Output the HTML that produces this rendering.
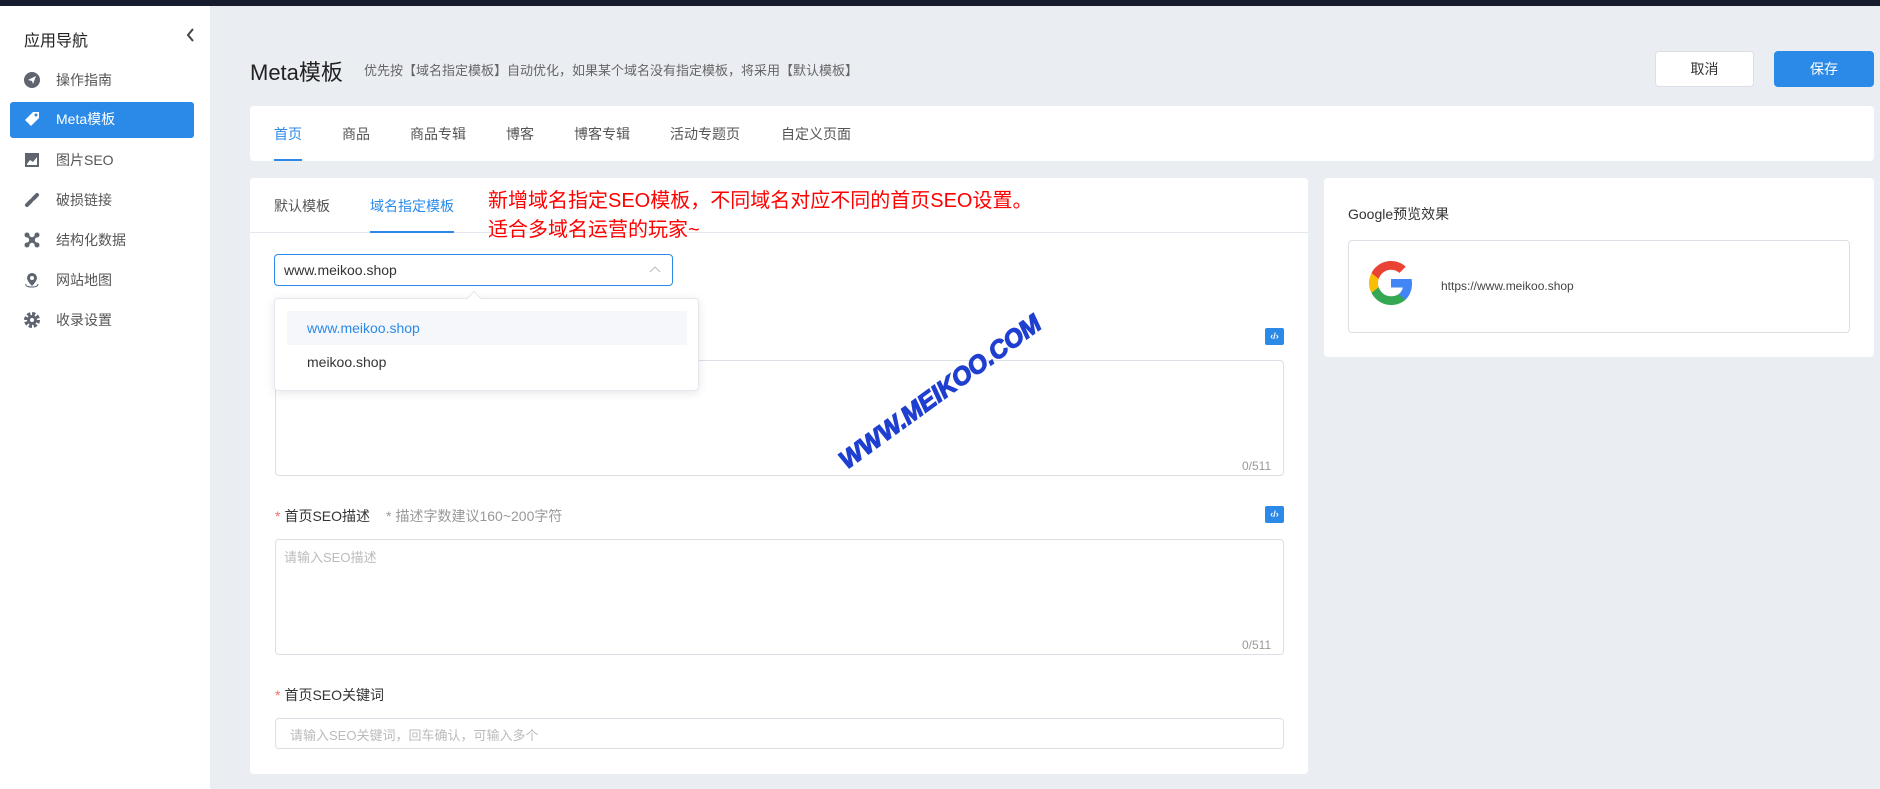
<!DOCTYPE html>
<html><head><meta charset="utf-8"><style>
*{margin:0;padding:0;box-sizing:border-box}
body{width:1880px;height:789px;overflow:hidden;background:#eaedf2;font-family:"Liberation Sans","Noto Sans CJK SC",sans-serif;position:relative;color:#333}
.a{position:absolute;white-space:nowrap}
.top{left:0;top:0;width:1880px;height:6px;background:#161c2e}
.side{left:0;top:6px;width:210px;height:783px;background:#fff}
.mi{position:absolute;left:24px;width:170px;height:20px;font-size:14px;color:#555;line-height:20px}
.mi svg{position:absolute;left:0;top:2px}
.mi span{position:absolute;left:32px}
.card{background:#fff;border-radius:4px}
.tab{font-size:14px;color:#555;top:124px;line-height:20px}
.ta{border:1px solid #dcdfe6;border-radius:4px;background:#fff}
.code{width:19px;height:17px;background:#2b8ae8;border-radius:2px;color:#fff;font-size:9px;text-align:center;line-height:17px;font-weight:bold}
.lbl{font-size:14px;color:#333;line-height:20px}
.lbl b{color:#f56c6c;font-weight:normal;margin-right:4px}
.cnt{font-size:12px;color:#999}
</style></head><body>
<div class="a top"></div>
<div class="a side"></div>
<div class="a" style="left:24px;top:27px;font-size:16px;color:#222">应用导航</div>
<svg class="a" style="left:186px;top:27px" width="10" height="16"><path d="M7 2L2 8L7 14" stroke="#444" stroke-width="2" fill="none"/></svg>
<div class="a" style="left:10px;top:102px;width:184px;height:36px;background:#2b8ae8;border-radius:3px"></div>
<div class="mi" style="top:70px"><svg width="16" height="16"><circle cx="8" cy="8" r="8" fill="#5e6470"/><path d="M4 8L12 4L9 12L8 9Z" fill="#fff"/></svg><span>操作指南</span></div>
<div class="mi" style="top:109px;color:#fff"><svg width="16" height="16"><path d="M9 1H15V7L7 15L1 9Z" fill="#fff"/><circle cx="12" cy="4" r="1.5" fill="#2b8ae8"/></svg><span>Meta模板</span></div>
<div class="mi" style="top:150px"><svg width="16" height="16"><rect x="1" y="1" width="14" height="14" fill="#5e6470"/><path d="M3 12L6 8L9 10L13 5V13H3Z" fill="#fff"/></svg><span>图片SEO</span></div>
<div class="mi" style="top:190px"><svg width="16" height="16"><path d="M3 13L7 9M9 7L13 3" stroke="#5e6470" stroke-width="4" stroke-linecap="round"/></svg><span>破损链接</span></div>
<div class="mi" style="top:230px"><svg width="16" height="16"><path d="M3 3L13 13M13 3L3 13" stroke="#5e6470" stroke-width="2.5"/><circle cx="3" cy="3" r="2.5" fill="#5e6470"/><circle cx="13" cy="3" r="2.5" fill="#5e6470"/><circle cx="3" cy="13" r="2.5" fill="#5e6470"/><circle cx="13" cy="13" r="2.5" fill="#5e6470"/><circle cx="8" cy="8" r="3" fill="#5e6470"/></svg><span>结构化数据</span></div>
<div class="mi" style="top:270px"><svg width="16" height="16"><path d="M8 1a5 5 0 0 1 5 5c0 3-5 8-5 8s-5-5-5-8a5 5 0 0 1 5-5z" fill="#5e6470"/><circle cx="8" cy="6" r="2" fill="#fff"/><path d="M2 12c-1 2 2 3 6 3s6-1 6-3" stroke="#5e6470" fill="none"/></svg><span>网站地图</span></div>
<div class="mi" style="top:310px"><svg width="16" height="16"><circle cx="8" cy="8" r="6" fill="none" stroke="#5e6470" stroke-width="4" stroke-dasharray="3 1.7"/><circle cx="8" cy="8" r="5" fill="#5e6470"/><circle cx="8" cy="8" r="2" fill="#fff"/></svg><span>收录设置</span></div>

<div class="a" style="left:250px;top:55px;font-size:22px;color:#222">Meta模板</div>
<div class="a" style="left:364px;top:60px;font-size:13px;color:#666">优先按【域名指定模板】自动优化，如果某个域名没有指定模板，将采用【默认模板】</div>
<div class="a" style="left:1655px;top:51px;width:99px;height:36px;background:#fff;border:1px solid #dcdfe6;border-radius:4px;font-size:14px;text-align:center;line-height:34px">取消</div>
<div class="a" style="left:1774px;top:51px;width:100px;height:36px;background:#2b8ae8;border-radius:4px;font-size:14px;color:#fff;text-align:center;line-height:36px">保存</div>

<div class="a card" style="left:250px;top:106px;width:1624px;height:55px"></div>
<div class="a tab" style="left:274px;color:#2b8ae8">首页</div>
<div class="a" style="left:274px;top:159px;width:28px;height:2px;background:#2b8ae8"></div>
<div class="a tab" style="left:342px">商品</div>
<div class="a tab" style="left:410px">商品专辑</div>
<div class="a tab" style="left:506px">博客</div>
<div class="a tab" style="left:574px">博客专辑</div>
<div class="a tab" style="left:670px">活动专题页</div>
<div class="a tab" style="left:781px">自定义页面</div>

<div class="a card" style="left:250px;top:178px;width:1058px;height:596px"></div>
<div class="a" style="left:250px;top:232px;width:1058px;height:1px;background:#e4e7ed"></div>
<div class="a tab" style="left:274px;top:196px">默认模板</div>
<div class="a tab" style="left:370px;top:196px;color:#2b8ae8">域名指定模板</div>
<div class="a" style="left:370px;top:231px;width:84px;height:2px;background:#2b8ae8"></div>
<div class="a" style="left:488px;top:187px;font-size:20px;color:#f00;line-height:29px">新增域名指定SEO模板，不同域名对应不同的首页SEO设置。<br>适合多域名运营的玩家~</div>

<div class="a" style="left:274px;top:254px;width:399px;height:32px;border:1px solid #2b8ae8;border-radius:4px;background:#fff"></div>
<div class="a" style="left:284px;top:260px;font-size:14px;line-height:20px;color:#333">www.meikoo.shop</div>
<svg class="a" style="left:649px;top:265px" width="12" height="8"><path d="M1 7L6 2L11 7" stroke="#bbb" fill="none"/></svg>

<div class="a lbl" style="left:275px;top:506px"><b>*</b>首页SEO描述<span style="color:#999;margin-left:16px"><b style="color:#999">*</b>描述字数建议160~200字符</span></div>
<div class="a code" style="left:1265px;top:328px">‹/›</div>
<div class="a code" style="left:1265px;top:506px">‹/›</div>
<div class="a ta" style="left:275px;top:360px;width:1009px;height:116px"></div>
<div class="a cnt" style="left:1242px;top:459px">0/511</div>
<div class="a ta" style="left:275px;top:539px;width:1009px;height:116px"></div>
<div class="a" style="left:284px;top:547px;font-size:13px;color:#bbb">请输入SEO描述</div>
<div class="a cnt" style="left:1242px;top:638px">0/511</div>
<div class="a lbl" style="left:275px;top:685px"><b>*</b>首页SEO关键词</div>
<div class="a ta" style="left:275px;top:718px;width:1009px;height:31px"></div>
<div class="a" style="left:290px;top:725px;font-size:13px;color:#bbb">请输入SEO关键词，回车确认，可输入多个</div>

<div class="a" style="left:274px;top:298px;width:425px;height:93px;background:#fff;border:1px solid #e4e7ed;border-radius:4px;box-shadow:0 2px 10px rgba(0,0,0,.1)"></div>
<div class="a" style="left:469px;top:293px;width:10px;height:10px;background:#fff;border-left:1px solid #e4e7ed;border-top:1px solid #e4e7ed;transform:rotate(45deg)"></div>
<div class="a" style="left:287px;top:311px;width:400px;height:34px;background:#f5f7fa"></div>
<div class="a" style="left:307px;top:318px;font-size:14px;line-height:20px;color:#2b8ae8">www.meikoo.shop</div>
<div class="a" style="left:307px;top:352px;font-size:14px;line-height:20px;color:#333">meikoo.shop</div>

<div class="a" style="font-size:25px;font-weight:bold;font-style:italic;color:#1f3fd0;-webkit-text-stroke:1.2px #1f3fd0;transform:rotate(-36deg);transform-origin:0 0;left:834px;top:452px">WWW.MEIKOO.COM</div>

<div class="a card" style="left:1324px;top:178px;width:550px;height:179px"></div>
<div class="a" style="left:1348px;top:204px;font-size:14px;color:#333">Google预览效果</div>
<div class="a" style="left:1348px;top:240px;width:502px;height:93px;border:1px solid #dcdfe6;border-radius:4px"></div>
<svg class="a" style="left:1367px;top:259px" width="48" height="48" viewBox="0 0 48 48"><path fill="#4285F4" d="M45 24.5c0-1.6-.1-3.1-.4-4.5H24v8.5h11.8c-.5 2.8-2 5.1-4.3 6.7v5.5h7C42.6 36.9 45 31.2 45 24.5z"/><path fill="#34A853" d="M24 46c5.9 0 10.8-2 14.5-5.3l-7-5.5c-2 1.3-4.5 2.1-7.5 2.1-5.7 0-10.6-3.900-12.3-9.1H4.5v5.7C8.1 41.1 15.5 46 24 46z"/><path fill="#FBBC05" d="M11.7 28.2c-.4-1.3-.7-2.7-.7-4.2s.3-2.9.7-4.2v-5.7H4.5C3 17 2 20.4 2 24s1 7 2.5 9.9z"/><path fill="#EA4335" d="M24 10.7c3.2 0 6.1 1.1 8.4 3.3l6.3-6.3C34.8 4.1 29.9 2 24 2 15.5 2 8.1 6.9 4.5 14.1l7.2 5.7c1.7-5.2 6.6-9.1 12.3-9.1z"/></svg>
<div class="a" style="left:1441px;top:279px;font-size:12px;color:#444">https://www.meikoo.shop</div>
</body></html>
